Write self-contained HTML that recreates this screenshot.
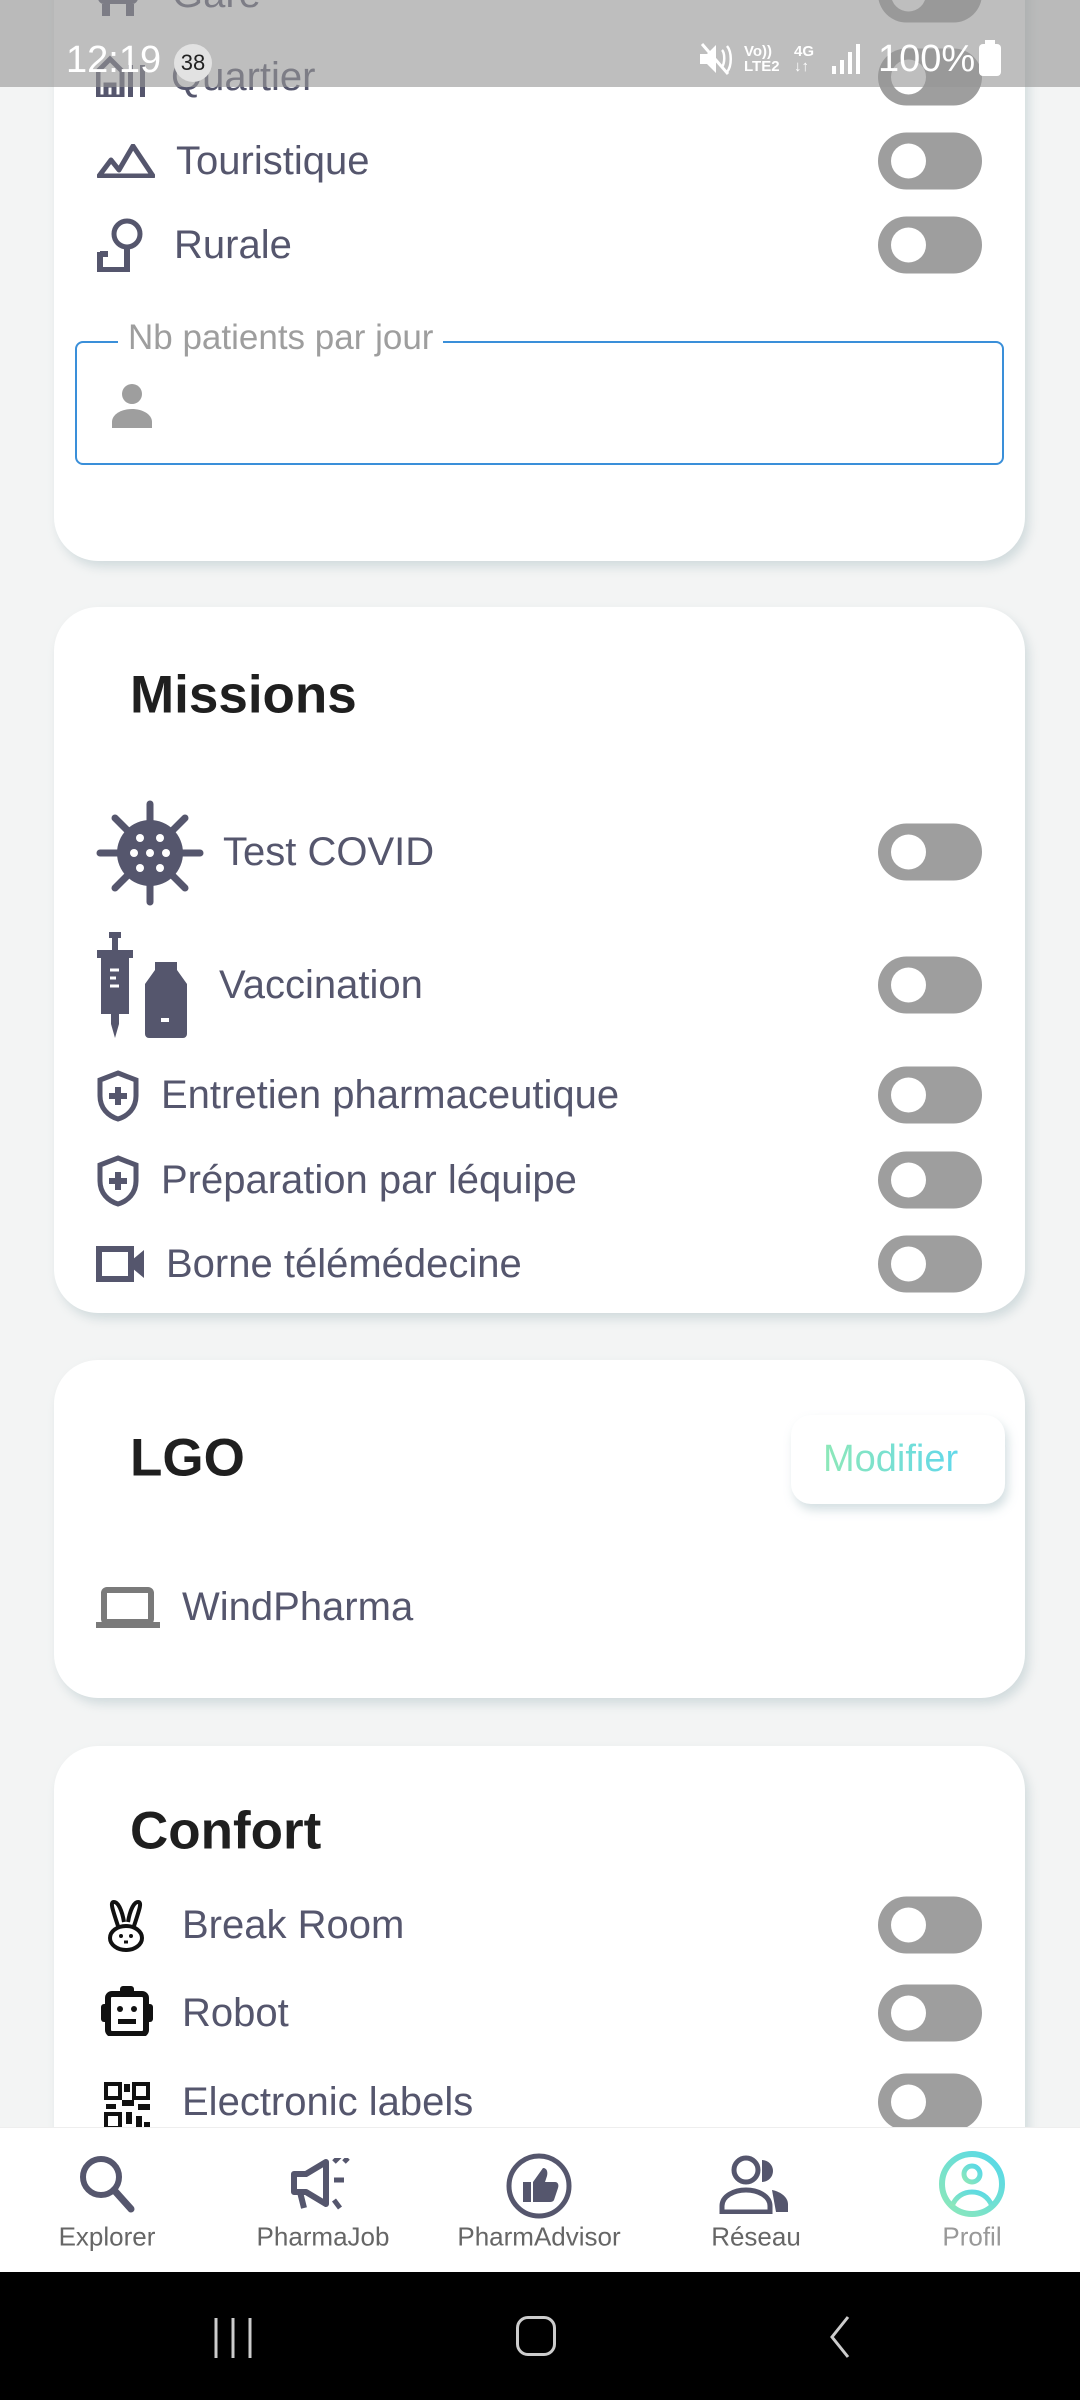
<!DOCTYPE html>
<html><head><meta charset="utf-8">
<style>
*{margin:0;padding:0;box-sizing:border-box}
body{width:1080px;height:2400px;background:#f3f4f4;position:relative;overflow:hidden;font-family:"Liberation Sans",sans-serif;color:#55566d}
.card{position:absolute;left:54px;width:971px;background:#fff;border-radius:44px;box-shadow:4px 6px 10px rgba(170,190,195,.45)}
.t{position:absolute;font-size:40px;line-height:40px;transform:translateY(-50%);white-space:nowrap;color:#55566d}
.h{position:absolute;font-size:53px;font-weight:700;color:#1f1f1f;transform:translateY(-50%);line-height:53px}
.tg{position:absolute;left:878px;width:104px;height:57px;border-radius:29px;background:#9e9e9e;transform:translateY(-50%)}
.tg:after{content:"";position:absolute;left:13px;top:11px;width:35px;height:35px;border-radius:50%;background:#fff}
.ic{position:absolute}
.nav{position:absolute;left:0;top:2127px;width:1080px;height:145px;background:#fff;border-top:1px solid #eee}
.nl{position:absolute;top:2237px;font-size:26px;color:#666;transform:translate(-50%,-50%);white-space:nowrap}
</style></head><body>

<!-- card 1 -->
<div class="card" style="top:-60px;height:621px"></div>
<svg class="ic" style="left:96px;top:-22px" width="44" height="40" viewBox="0 0 44 40"><rect x="2" y="0" width="40" height="26" rx="6" fill="#55566d"/><rect x="6" y="26" width="8" height="12" fill="#55566d"/><rect x="30" y="26" width="8" height="12" fill="#55566d"/></svg>
<div class="t" style="left:172px;top:-6px">Gare</div>
<div class="tg" style="top:-6px"></div>
<svg class="ic" style="left:96px;top:55px" width="54" height="42" viewBox="0 0 54 42"><path d="M2 42V16L14 4l12 12v26z M10 42V30h8v12" fill="none" stroke="#55566d" stroke-width="5"/><rect x="32" y="10" width="5" height="32" fill="#55566d"/><rect x="44" y="10" width="5" height="32" fill="#55566d"/></svg>
<div class="t" style="left:171px;top:77px">Quartier</div>
<div class="tg" style="top:77px"></div>
<svg class="ic" style="left:97px;top:144px" width="58" height="34" viewBox="0 0 58 34"><path d="M2 32L14 16l8 10L36 2l20 30z" fill="none" stroke="#55566d" stroke-width="5" stroke-linejoin="round"/></svg>
<div class="t" style="left:176px;top:161px">Touristique</div>
<div class="tg" style="top:161px"></div>
<svg class="ic" style="left:97px;top:218px" width="54" height="54" viewBox="0 0 54 54"><circle cx="30" cy="16" r="13" fill="none" stroke="#55566d" stroke-width="5"/><path d="M30 29v20 M3 34v18h30 M3 36h8" fill="none" stroke="#55566d" stroke-width="6"/></svg>
<div class="t" style="left:174px;top:245px">Rurale</div>
<div class="tg" style="top:245px"></div>

<div style="position:absolute;left:75px;top:341px;width:929px;height:124px;border:2px solid #3a8fd9;border-radius:8px"></div>
<div style="position:absolute;left:118px;top:318px;background:#fff;padding:0 10px;font-size:35px;color:#9e9e9e;line-height:40px">Nb patients par jour</div>
<svg class="ic" style="left:110px;top:383px" width="45" height="45" viewBox="0 0 45 45"><circle cx="22" cy="11" r="10" fill="#9e9e9e"/><path d="M2 45v-6c0-8 10-13 20-13s20 5 20 13v6z" fill="#9e9e9e"/></svg>

<!-- card 2 Missions -->
<div class="card" style="top:607px;height:706px"></div>
<div class="h" style="left:130px;top:695px">Missions</div>
<svg class="ic" style="left:96px;top:800px" width="108" height="106" viewBox="0 0 108 106"><g stroke="#55566d" stroke-width="7" stroke-linecap="round"><line x1="54" y1="4" x2="54" y2="102"/><line x1="4" y1="53" x2="104" y2="53"/><line x1="19" y1="18" x2="89" y2="88"/><line x1="89" y1="18" x2="19" y2="88"/></g><circle cx="54" cy="53" r="33" fill="#55566d"/><g fill="#fff"><circle cx="44" cy="38" r="4"/><circle cx="64" cy="38" r="4"/><circle cx="38" cy="53" r="4"/><circle cx="54" cy="53" r="4"/><circle cx="70" cy="53" r="4"/><circle cx="44" cy="68" r="4"/><circle cx="64" cy="68" r="4"/></g></svg>
<div class="t" style="left:223px;top:852px">Test COVID</div>
<div class="tg" style="top:852px"></div>
<svg class="ic" style="left:97px;top:932px" width="100" height="106" viewBox="0 0 100 106"><g fill="#55566d"><rect x="12" y="0" width="12" height="6"/><rect x="15" y="4" width="6" height="16"/><rect x="0" y="18" width="36" height="8"/><rect x="4" y="26" width="28" height="56"/><path d="M14 82h8v10l-4 14-4-14z"/><path d="M58 30h22v8l10 14v50a4 4 0 0 1-4 4H52a4 4 0 0 1-4-4V52l10-14z"/></g><path d="M13 38h9 M13 46h6 M13 54h9" stroke="#fff" stroke-width="3"/><rect x="64" y="86" width="8" height="4" fill="#fff"/></svg>
<div class="t" style="left:219px;top:985px">Vaccination</div>
<div class="tg" style="top:985px"></div>
<svg class="ic" style="left:96px;top:1070px" width="44" height="52" viewBox="0 0 44 52"><path d="M22 3L40 10v16c0 12-8 20-18 23C12 46 4 38 4 26V10z" fill="none" stroke="#55566d" stroke-width="5"/><path d="M22 17v18 M13 26h18" stroke="#55566d" stroke-width="6"/></svg>
<div class="t" style="left:161px;top:1095px">Entretien pharmaceutique</div>
<div class="tg" style="top:1095px"></div>
<svg class="ic" style="left:96px;top:1155px" width="44" height="52" viewBox="0 0 44 52"><path d="M22 3L40 10v16c0 12-8 20-18 23C12 46 4 38 4 26V10z" fill="none" stroke="#55566d" stroke-width="5"/><path d="M22 17v18 M13 26h18" stroke="#55566d" stroke-width="6"/></svg>
<div class="t" style="left:161px;top:1180px">Préparation par léquipe</div>
<div class="tg" style="top:1180px"></div>
<svg class="ic" style="left:96px;top:1246px" width="50" height="36" viewBox="0 0 50 36"><rect x="3" y="3" width="32" height="30" fill="none" stroke="#55566d" stroke-width="6"/><path d="M36 14l12-10v28L36 22z" fill="#55566d"/></svg>
<div class="t" style="left:166px;top:1264px">Borne télémédecine</div>
<div class="tg" style="top:1264px"></div>

<!-- card 3 LGO -->
<div class="card" style="top:1360px;height:338px"></div>
<div class="h" style="left:130px;top:1458px">LGO</div>
<div style="position:absolute;left:791px;top:1415px;width:214px;height:89px;background:#fff;border-radius:20px;box-shadow:3px 6px 10px rgba(160,185,190,.45)"></div>
<div style="position:absolute;left:823px;top:1437px;font-size:38px;line-height:44px;background:linear-gradient(90deg,#8ee8b8,#62d8ea);-webkit-background-clip:text;background-clip:text;color:transparent">Modifier</div>
<svg class="ic" style="left:96px;top:1587px" width="64" height="42" viewBox="0 0 64 42"><rect x="8" y="3" width="47" height="32" rx="3" fill="none" stroke="#7a7a7a" stroke-width="6"/><rect x="0" y="35" width="64" height="6" fill="#7a7a7a"/></svg>
<div class="t" style="left:182px;top:1607px">WindPharma</div>

<!-- card 4 Confort -->
<div class="card" style="top:1746px;height:500px"></div>
<div class="h" style="left:130px;top:1831px">Confort</div>
<svg class="ic" style="left:104px;top:1900px" width="44" height="52" viewBox="0 0 44 52"><path d="M14 26C8 8 6 2 10 2s8 8 10 20 M30 26c6-18 8-24 4-24s-8 8-10 20" fill="none" stroke="#111" stroke-width="4"/><ellipse cx="22" cy="38" rx="16" ry="12" fill="none" stroke="#111" stroke-width="4"/><circle cx="17" cy="36" r="2" fill="#111"/><circle cx="27" cy="36" r="2" fill="#111"/><path d="M20 42h4" stroke="#111" stroke-width="3"/></svg>
<div class="t" style="left:182px;top:1925px">Break Room</div>
<div class="tg" style="top:1925px"></div>
<svg class="ic" style="left:99px;top:1986px" width="56" height="50" viewBox="0 0 56 50"><rect x="21" y="0" width="14" height="8" rx="3" fill="#111"/><rect x="9" y="8" width="38" height="40" rx="4" fill="none" stroke="#111" stroke-width="6"/><rect x="2" y="18" width="7" height="18" rx="3" fill="#111"/><rect x="47" y="18" width="7" height="18" rx="3" fill="#111"/><circle cx="21" cy="23" r="3" fill="#111"/><circle cx="35" cy="23" r="3" fill="#111"/><rect x="19" y="33" width="18" height="5" fill="#111"/></svg>
<div class="t" style="left:182px;top:2013px">Robot</div>
<div class="tg" style="top:2013px"></div>
<svg class="ic" style="left:104px;top:2082px" width="48" height="48" viewBox="0 0 48 48"><g fill="none" stroke="#111" stroke-width="4"><rect x="2" y="2" width="14" height="14"/><rect x="30" y="2" width="14" height="14"/><rect x="2" y="32" width="14" height="14"/></g><g fill="#111"><rect x="20" y="2" width="6" height="8"/><rect x="2" y="22" width="10" height="5"/><rect x="18" y="18" width="12" height="6"/><rect x="34" y="22" width="12" height="6"/><rect x="22" y="30" width="6" height="12"/><rect x="32" y="34" width="6" height="12"/><rect x="40" y="40" width="6" height="6"/></g></svg>
<div class="t" style="left:182px;top:2102px">Electronic labels</div>
<div class="tg" style="top:2102px"></div>

<!-- status bar overlay -->
<div style="position:absolute;left:0;top:0;width:1080px;height:87px;background:rgba(150,150,150,.62)"></div>
<div style="position:absolute;left:66px;top:40px;font-size:38px;color:#fff;line-height:40px">12:19</div>
<div style="position:absolute;left:174px;top:44px;width:38px;height:38px;border-radius:50%;background:#e2e2e2;font-size:22px;color:#222;text-align:center;line-height:38px">38</div>
<svg class="ic" style="left:698px;top:42px" width="36" height="34" viewBox="0 0 36 34"><path d="M2 12h7l9-9v28l-9-9H2z" fill="#fff"/><path d="M4 2l26 30" stroke="#fff" stroke-width="3"/><path d="M24 8c3 3 3 13 0 17 M29 4c5 6 5 20 0 26" fill="none" stroke="#fff" stroke-width="2.5"/></svg>
<div style="position:absolute;left:744px;top:44px;font-size:15px;color:#fff;line-height:15px;font-weight:700">Vo))<br>LTE2</div>
<div style="position:absolute;left:794px;top:44px;font-size:15px;color:#fff;line-height:15px;font-weight:700">4G<br>↓↑</div>
<svg class="ic" style="left:830px;top:44px" width="34" height="30" viewBox="0 0 34 30"><rect x="2" y="22" width="4" height="8" fill="#fff"/><rect x="10" y="16" width="4" height="14" fill="#fff"/><rect x="18" y="8" width="4" height="22" fill="#fff"/><rect x="26" y="0" width="4" height="30" fill="#fff"/></svg>
<div style="position:absolute;left:878px;top:38px;font-size:38px;color:#fff;line-height:42px">100%</div>
<div style="position:absolute;left:979px;top:44px;width:22px;height:32px;border-radius:4px;background:#fff"></div>
<div style="position:absolute;left:985px;top:40px;width:10px;height:5px;background:#fff"></div>

<!-- bottom nav -->
<div class="nav"></div>
<svg class="ic" style="left:77px;top:2153px" width="60" height="60" viewBox="0 0 60 60"><circle cx="24" cy="24" r="18" fill="none" stroke="#55566d" stroke-width="6"/><path d="M37 37l17 19" stroke="#55566d" stroke-width="7" stroke-linecap="round"/></svg>
<div class="nl" style="left:107px">Explorer</div>
<svg class="ic" style="left:290px;top:2158px" width="66" height="54" viewBox="0 0 66 54"><path d="M4 16h12l20-12v42L16 34H4z M10 34l4 16" fill="none" stroke="#55566d" stroke-width="6" stroke-linejoin="round"/><path d="M44 4l6-6 M44 22h10 M44 42l6 8 M54 4l4-4" stroke="#55566d" stroke-width="5"/></svg>
<div class="nl" style="left:323px">PharmaJob</div>
<svg class="ic" style="left:505px;top:2152px" width="68" height="68" viewBox="0 0 68 68"><circle cx="34" cy="34" r="30" fill="none" stroke="#55566d" stroke-width="5"/><path d="M18 30h8v20h-8z M28 30l10-14c4 0 5 4 4 8l-2 6h10c3 0 4 3 3 6l-4 12c-1 2-3 2-5 2H28z" fill="#55566d"/></svg>
<div class="nl" style="left:539px">PharmAdvisor</div>
<svg class="ic" style="left:718px;top:2154px" width="76" height="60" viewBox="0 0 76 60"><circle cx="28" cy="16" r="12" fill="none" stroke="#55566d" stroke-width="5"/><path d="M4 58v-6c0-10 12-16 24-16s24 6 24 16v6z" fill="none" stroke="#55566d" stroke-width="5"/><path d="M44 6a11 11 0 0 1 0 22z M54 36c10 2 16 8 16 14v8H58z" fill="#55566d"/></svg>
<div class="nl" style="left:756px">Réseau</div>
<svg class="ic" style="left:938px;top:2150px" width="68" height="68" viewBox="0 0 68 68"><defs><linearGradient id="g" x1="0" y1="1" x2="1" y2="0"><stop offset="0" stop-color="#8ee8b8"/><stop offset="1" stop-color="#55d8ea"/></linearGradient></defs><circle cx="34" cy="34" r="30" fill="none" stroke="url(#g)" stroke-width="6"/><circle cx="34" cy="24" r="8" fill="none" stroke="url(#g)" stroke-width="5"/><path d="M14 56c4-10 12-14 20-14s16 4 20 14" fill="none" stroke="url(#g)" stroke-width="5"/></svg>
<div class="nl" style="left:972px;color:#999">Profil</div>

<!-- android nav -->
<div style="position:absolute;left:0;top:2272px;width:1080px;height:128px;background:#000"></div>
<svg class="ic" style="left:210px;top:2316px" width="50" height="44" viewBox="0 0 50 44"><path d="M6 2v40 M23 2v40 M40 2v40" stroke="#ccc" stroke-width="3"/></svg>
<div style="position:absolute;left:516px;top:2316px;width:40px;height:40px;border:3px solid #ccc;border-radius:12px"></div>
<svg class="ic" style="left:824px;top:2314px" width="30" height="46" viewBox="0 0 30 46"><path d="M24 3L8 23l16 20" fill="none" stroke="#ccc" stroke-width="3"/></svg>
</body></html>
